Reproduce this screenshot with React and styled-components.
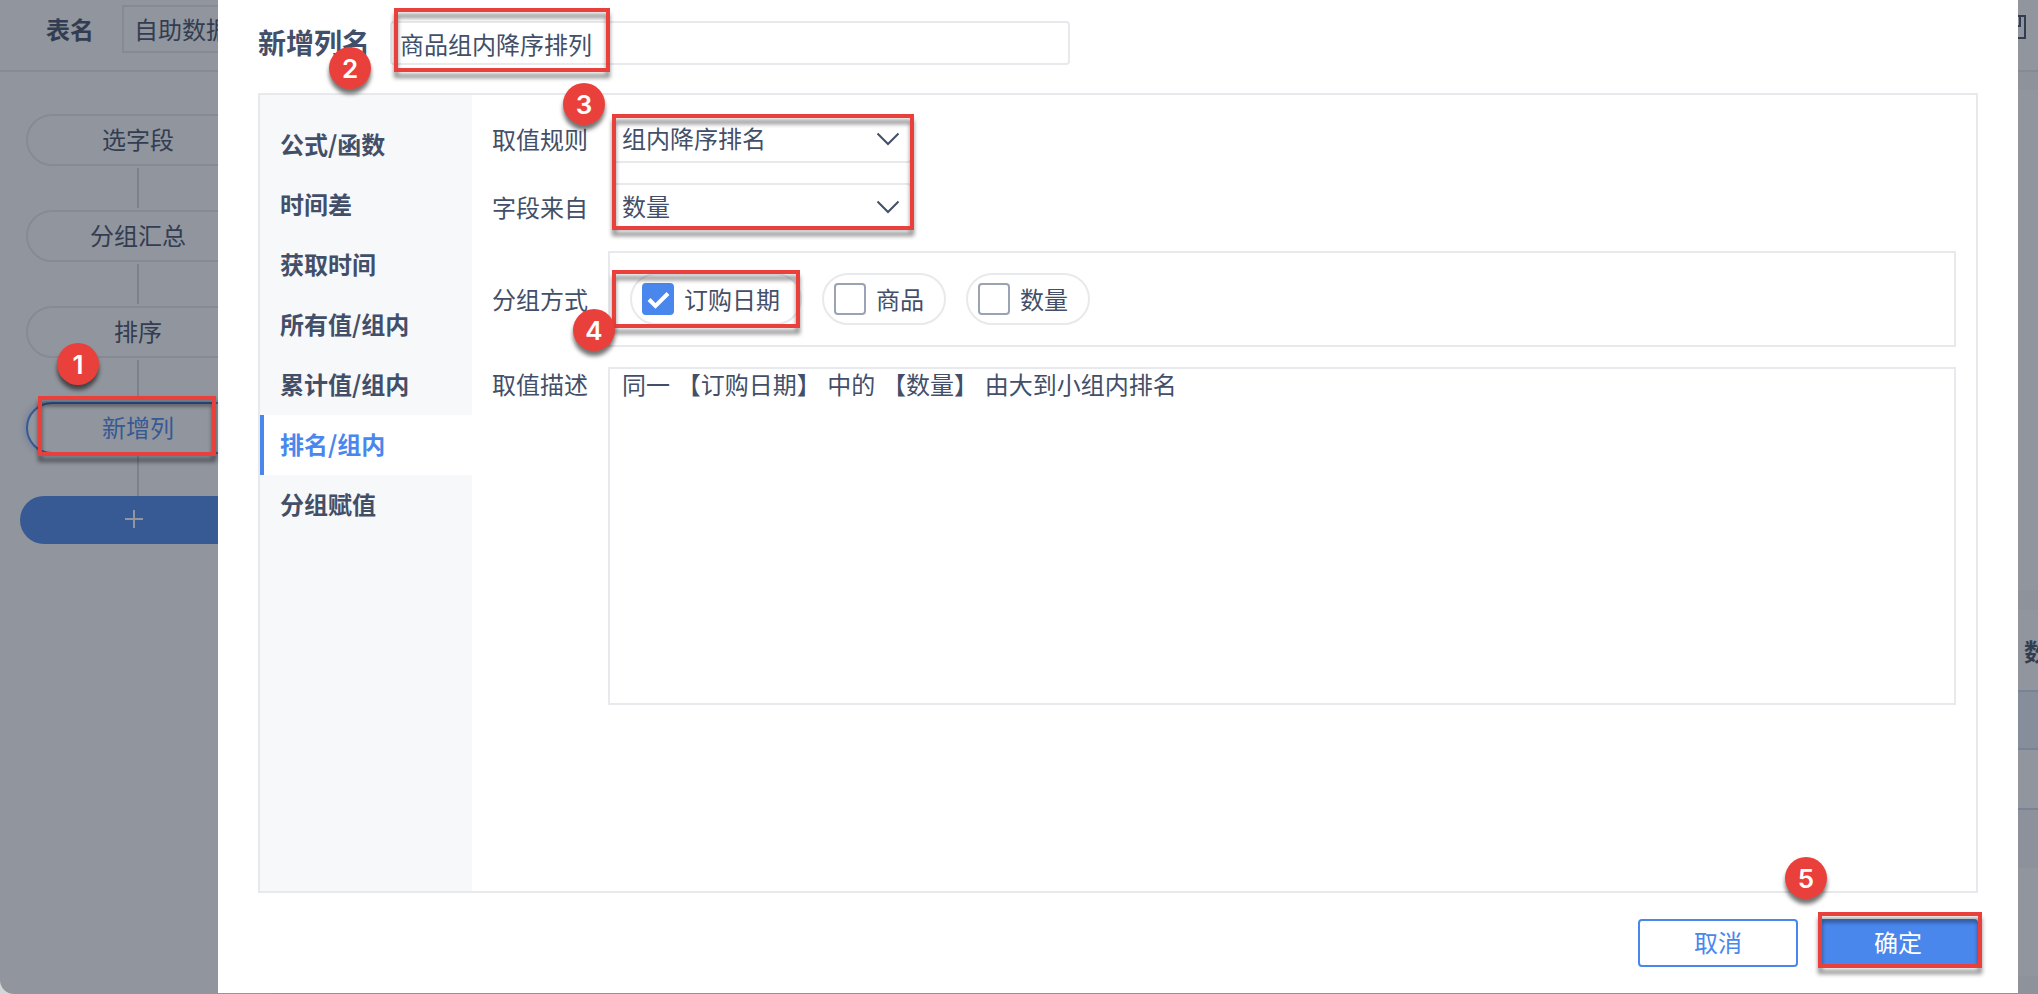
import React from "react";
import styled, { createGlobalStyle, css } from "styled-components";

const Global = createGlobalStyle`
  * { box-sizing: border-box; }
  html, body, #root { height: 100%; }
  body {
    margin: 0;
    overflow: hidden;
    background: #d4d6da;
    color: #434f68;
    font: 400 24px/36px "Noto Sans CJK SC", sans-serif;
  }
  button, input, select, textarea { font: inherit; color: inherit; margin: 0; }
`;

const LINE = "#e8e9ed";
const BLUE = "#4a87ec";
const RED = "#ea403c";

const Page = styled.div`
  position: relative;
  height: 100%;
  display: flex;
  flex-direction: column;
  background: #fff;
  border-bottom-left-radius: 14px;
  overflow: hidden;
`;

const TopBar = styled.header`
  display: flex;
  align-items: center;
  flex: none;
  height: 72px;
  padding: 0 12px 12px 46px;
  border-bottom: 2px solid ${LINE};
`;

const TableLabel = styled.label`
  font-weight: 700;
  margin-right: 28px;
`;

const TableInput = styled.input`
  width: 400px;
  height: 48px;
  padding: 0 10px 2px;
  border: 2px solid ${LINE};
  background: transparent;
`;

const SaveButton = styled.button`
  display: flex;
  margin-left: auto;
  padding: 0 0 4px;
  border: 0;
  background: none;
`;

const Body = styled.div`
  display: flex;
  flex: 1;
  min-height: 0;
`;

const Steps = styled.aside`
  display: flex;
  flex-direction: column;
  align-items: flex-start;
  width: 272px;
  padding: 42px 0 0 20px;
`;

const StepSlot = styled.div`
  position: relative;
  width: 236px;
  padding: 0 6px;
`;

const Step = styled.button`
  display: block;
  width: 100%;
  height: 52px;
  padding: 0 0 2px;
  border: 2px solid ${LINE};
  border-radius: 26px;
  background: #fff;
  ${(p) =>
    p.$active &&
    css`
      color: ${BLUE};
      border-color: ${BLUE};
      box-shadow: 0 0 8px rgba(74, 135, 236, 0.5);
    `}
`;

const Connector = styled.div`
  width: 2px;
  height: 40px;
  margin: 2px 0 ${(p) => (p.$last ? 0 : 2)}px 117px;
  background: #d4d7de;
`;

const AddStep = styled.button`
  display: flex;
  align-items: center;
  justify-content: center;
  width: 228px;
  height: 48px;
  padding: 0 0 2px;
  border: 0;
  border-radius: 24px;
  background: ${BLUE};
  color: #fff;
`;

const Preview = styled.main`
  display: flex;
  flex-direction: column;
  flex: 1;
  min-width: 0;
`;

const Band = styled.div`
  flex: none;
  height: ${(p) => p.$h}px;
  background: #f8f8f9;
`;

const Canvas = styled.div`
  flex: none;
  height: 500px;
`;

const DataTable = styled.table`
  width: 100%;
  border-collapse: separate;
  border-spacing: 0;
  table-layout: fixed;
  th {
    height: 82px;
    padding: 0 0 2px;
    font-weight: 700;
    border-bottom: 2px solid #d0d9ee;
    text-align: right;
  }
  td {
    height: 58px;
    padding: 0;
    border-bottom: 2px solid #d0d9ee;
  }
  tr:nth-child(odd) td { background: #eaf0fb; }
  tr:nth-child(even) td { height: 60px; }
`;

const HeadText = styled.span`
  display: inline-block;
  width: 14px;
  overflow: hidden;
  white-space: nowrap;
  text-align: left;
  vertical-align: middle;
`;

const NextRow = styled.div`
  flex: none;
  height: 58px;
  background: #f6f6fa;
`;

const Rest = styled.div`
  flex: 1;
`;

const Overlay = styled.div`
  position: absolute;
  inset: 0;
  z-index: 1;
  display: flex;
  padding: 0 20px 1px 218px;
  background: rgba(36, 44, 60, 0.5);
`;

const Dialog = styled.section`
  display: flex;
  flex-direction: column;
  flex: 1;
  min-width: 0;
  padding: 0 40px 26px;
  background: #fff;
`;

const DialogHead = styled.div`
  display: flex;
  align-items: center;
  gap: 20px;
  padding: 21px 0 28px;
`;

const TitleLabel = styled.label`
  position: relative;
  padding-bottom: 2px;
  font-size: 28px;
  font-weight: 700;
`;

const Anchor = styled.div`
  position: relative;
  display: flex;
`;

const NameInput = styled.input`
  width: 680px;
  height: 44px;
  padding: 0 8px;
  border: 2px solid ${LINE};
  border-radius: 4px;
`;

const Panel = styled.div`
  display: flex;
  flex: 1;
  min-height: 0;
  border: 2px solid ${LINE};
`;

const Nav = styled.nav`
  width: 212px;
  padding-top: 20px;
  background: #f7f8fa;
`;

const NavItem = styled.button`
  display: block;
  width: 100%;
  height: 60px;
  padding: 0 16px 2px;
  border: 0;
  border-left: 4px solid ${(p) => (p.$active ? BLUE : "transparent")};
  background: ${(p) => (p.$active ? "#fff" : "transparent")};
  color: ${(p) => (p.$active ? BLUE : "inherit")};
  font-weight: 700;
  text-align: left;
`;

const Form = styled.div`
  display: flex;
  flex-direction: column;
  gap: 20px;
  flex: 1;
  min-width: 0;
  padding: 20px;
`;

const Row = styled.div`
  display: flex;
  align-items: ${(p) => (p.$top ? "flex-start" : "center")};
  gap: 20px;
  line-height: ${(p) => (p.$top ? 34 : 36)}px;
`;

const RowLabel = styled.label`
  flex: none;
  width: 96px;
`;

const SelectPair = styled.div`
  position: relative;
  display: flex;
  flex-direction: column;
  gap: 20px;
`;

const SelectBox = styled.div`
  display: flex;
  align-items: center;
  margin-left: 4px;
  width: 300px;
  height: 48px;
  border: 2px solid ${LINE};
  border-radius: 4px;

  select {
    flex: 1;
    height: 44px;
    padding: 0 0 2px 8px;
    border: 0;
    background: none;
    appearance: none;
  }
  svg {
    flex: none;
    margin: 0 10px 0 -34px;
    pointer-events: none;
  }
`;

const Groups = styled.div`
  display: flex;
  flex: 1;
  gap: 20px;
  padding: 20px;
  border: 2px solid ${LINE};
`;

const Chip = styled.label`
  display: flex;
  align-items: center;
  gap: 10px;
  height: 52px;
  padding: 0 20px 0 10px;
  border: 2px solid ${LINE};
  border-radius: 26px;
`;

const TickBox = styled.span`
  position: relative;
  display: flex;

  input {
    appearance: none;
    width: 32px;
    height: 32px;
    border: 2px solid #9aa3b3;
    border-radius: 4px;
    background: #fff;
  }
  input:checked {
    border-color: ${BLUE};
    background: ${BLUE};
  }
  svg {
    position: absolute;
    inset: 0;
    visibility: hidden;
    pointer-events: none;
  }
  input:checked + svg { visibility: visible; }
`;

const Description = styled.textarea`
  flex: 1;
  height: 338px;
  padding: 0 12px;
  border: 2px solid ${LINE};
  resize: none;
  font-family: "Liberation Sans", "Noto Sans CJK SC", sans-serif;
  line-height: 34px;
`;

const Footer = styled.footer`
  display: flex;
  justify-content: flex-end;
  gap: 20px;
  padding-top: 26px;
`;

const ActionButton = styled.button`
  width: 160px;
  height: 48px;
  padding: 0 0 2px;
  border: 2px solid ${BLUE};
  border-radius: 4px;
  background: ${(p) => (p.$primary ? BLUE : "#fff")};
  color: ${(p) => (p.$primary ? "#fff" : BLUE)};
`;

const Frame = styled.div`
  position: absolute;
  z-index: 2;
  inset: ${(p) => p.$inset};
  ${(p) => p.$w && `width: ${p.$w}px;`}
  border: 4px solid ${RED};
  filter: drop-shadow(0 6px 2px rgba(0, 0, 0, 0.45));
  pointer-events: none;
`;

const Badge = styled.span`
  position: absolute;
  z-index: 3;
  left: ${(p) => p.$x}px;
  top: ${(p) => p.$y}px;
  width: 42px;
  height: 42px;
  border-radius: 50%;
  background: ${RED};
  box-shadow: 0 5px 4px rgba(0, 0, 0, 0.55);
  color: #fff;
  font: 600 26px/44px Inter, "Liberation Sans", sans-serif;
  text-align: center;
`;

const Chevron = () => (
  <svg width="24" height="24" viewBox="0 0 24 24" fill="none" stroke="#434f68" strokeWidth="2">
    <path d="M1.5 6.5 L12 17 L22.5 6.5" />
  </svg>
);

const NAV = ["公式/函数", "时间差", "获取时间", "所有值/组内", "累计值/组内", "排名/组内", "分组赋值"];
const STEPS = ["选字段", "分组汇总", "排序", "新增列"];
const GROUPS = ["订购日期", "商品", "数量"];

export default function App() {
  return (
    <>
      <Global />
      <Page>
        <TopBar>
          <TableLabel htmlFor="table-name">表名</TableLabel>
          <TableInput id="table-name" defaultValue="自助数据" />
          <SaveButton aria-label="保存">
            <svg width="24" height="24" viewBox="0 0 24 24" fill="none" stroke="#434f68" strokeWidth="2">
              <path d="M1 1H23V23H1Z M6 1V11H18V1" />
            </svg>
          </SaveButton>
        </TopBar>
        <Body>
          <Steps>
            {STEPS.map((name, i) => {
              const last = i === STEPS.length - 1;
              return (
                <React.Fragment key={name}>
                  <StepSlot>
                    <Step $active={last}>{name}</Step>
                    {last && (
                      <>
                        <Frame $inset="-6px auto -2px 18px" $w={178} />
                        <Badge $x={37} $y={-59}>1</Badge>
                      </>
                    )}
                  </StepSlot>
                  <Connector $last={last} />
                </React.Fragment>
              );
            })}
            <AddStep aria-label="添加步骤">
              <svg width="18" height="18" viewBox="0 0 18 18" stroke="currentColor" strokeWidth="2">
                <path d="M9 0V18M0 9H18" />
              </svg>
            </AddStep>
          </Steps>
          <Preview>
            <Band $h={18} />
            <Canvas />
            <Band $h={20} />
            <DataTable>
              <thead><tr><th><HeadText>数</HeadText></th></tr></thead>
              <tbody><tr><td /></tr><tr><td /></tr></tbody>
            </DataTable>
            <NextRow />
            <Rest />
            <Band $h={18} />
          </Preview>
        </Body>

        <Overlay>
          <Dialog role="dialog" aria-label="新增列">
            <DialogHead>
              <TitleLabel htmlFor="column-name">
                新增列名
                <Badge $x={71} $y={23}>2</Badge>
              </TitleLabel>
              <Anchor>
                <NameInput id="column-name" defaultValue="商品组内降序排列" />
                <Frame $inset="-13px auto -7px 4px" $w={216} />
              </Anchor>
            </DialogHead>
            <Panel>
              <Nav>
                {NAV.map((n) => (
                  <NavItem key={n} $active={n === "排名/组内"}>{n}</NavItem>
                ))}
              </Nav>
              <Form>
                <SelectPair>
                  <Row>
                    <RowLabel htmlFor="rule">取值规则</RowLabel>
                    <SelectBox>
                      <select id="rule"><option>组内降序排名</option></select>
                      <Chevron />
                    </SelectBox>
                  </Row>
                  <Row>
                    <RowLabel htmlFor="field">字段来自</RowLabel>
                    <SelectBox>
                      <select id="field"><option>数量</option></select>
                      <Chevron />
                    </SelectBox>
                  </Row>
                  <Frame $inset="-1px auto 1px 120px" $w={302} />
                  <Badge $x={71} $y={-32}>3</Badge>
                </SelectPair>
                <Row>
                  <RowLabel as="span">分组方式</RowLabel>
                  <Groups>
                    {GROUPS.map((g, i) => (
                      <Anchor key={g}>
                        <Chip>
                          <TickBox>
                            <input type="checkbox" defaultChecked={i === 0} />
                            <svg width="32" height="32" viewBox="0 0 32 32" fill="none" stroke="#fff" strokeWidth="4">
                              <path d="M7 16.5 L13.5 23 L26 10.5" />
                            </svg>
                          </TickBox>
                          {g}
                        </Chip>
                        {i === 0 && (
                          <>
                            <Frame $inset="-3px 2px -3px -18px" />
                            <Badge $x={-57} $y={36}>4</Badge>
                          </>
                        )}
                      </Anchor>
                    ))}
                  </Groups>
                </Row>
                <Row $top>
                  <RowLabel htmlFor="description">取值描述</RowLabel>
                  <Description
                    id="description"
                    defaultValue="同一 【订购日期】 中的 【数量】 由大到小组内排名"
                  />
                </Row>
              </Form>
            </Panel>
            <Footer>
              <ActionButton>取消</ActionButton>
              <Anchor>
                <ActionButton $primary>确定</ActionButton>
                <Frame $inset="-7px -4px -1px 0" />
                <Badge $x={-33} $y={-62}>5</Badge>
              </Anchor>
            </Footer>
          </Dialog>
        </Overlay>
      </Page>
    </>
  );
}
